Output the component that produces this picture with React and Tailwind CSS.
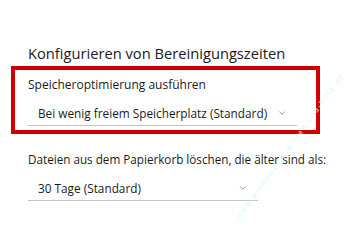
import { ChevronDown } from "lucide-react";

function Dropdown({ label, width }) {
  return (
    <div
      className={`flex items-center justify-between h-[25px] pl-[10px] pr-[10px] border-b border-[#c4c4c4] ${width}`}
    >
      <span className="text-[11.8px] leading-[18px] text-[#1b1b1b] whitespace-nowrap">{label}</span>
      <ChevronDown size={10} strokeWidth={1.5} className="text-[#555]" />
    </div>
  );
}

export default function App() {
  return (
    <div className="relative w-[350px] h-[250px] bg-white overflow-hidden font-['Open_Sans',sans-serif] text-[#1b1b1b]">
      <div className="pt-[43px] pl-[28px] text-[14.7px] leading-[20px] whitespace-nowrap">
        Konfigurieren von Bereinigungszeiten
      </div>

      <div className="ml-[11px] mt-[3px] w-[309px] h-[68px] border-4 border-[#d10000] pl-[13px] pt-[6px]">
        <div className="text-[12px] leading-[18px] whitespace-nowrap">Speicheroptimierung ausführen</div>
        <div className="mt-[7px]">
          <Dropdown label="Bei wenig freiem Speicherplatz (Standard)" width="w-[269px]" />
        </div>
      </div>

      <div className="pl-[28px] pt-[16px]">
        <div className="text-[11.7px] leading-[18px] whitespace-nowrap">
          Dateien aus dem Papierkorb löschen, die älter sind als:
        </div>
        <div className="mt-[8px]">
          <Dropdown label="30 Tage (Standard)" width="w-[230px]" />
        </div>
      </div>

      <span
        aria-hidden="true"
        className="absolute left-[238px] top-[214px] origin-left -rotate-[54deg] text-[7px] leading-none tracking-[1.6px] text-[#d2f7fa] whitespace-nowrap select-none"
      >
        www.windows-10-wissen-und-hilfe.de
      </span>
    </div>
  );
}
